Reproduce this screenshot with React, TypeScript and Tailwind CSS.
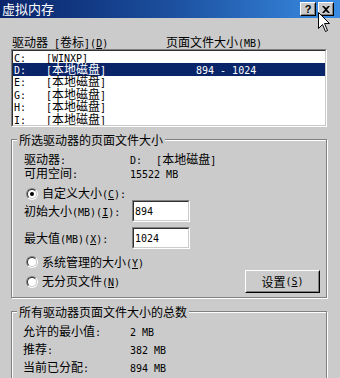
import React from "react";

const GRAY = "bg-[#cbcbcb]";

function T({ s }: { s: string }) {
  const out: React.ReactNode[] = [];
  const re = /([\x00-\x7f]+)|([^\x00-\x7f]+)/g;
  let m: RegExpExecArray | null;
  let k = 0;
  while ((m = re.exec(s))) {
    if (m[1]) {
      const seg = m[1];
      const sub: React.ReactNode[] = [];
      let buf = "";
      for (let i = 0; i < seg.length; i++) {
        if (seg[i] === "&" && i + 1 < seg.length) {
          if (buf) sub.push(buf);
          buf = "";
          sub.push(
            <span key={i} className="underline underline-offset-[1px]">
              {seg[i + 1]}
            </span>
          );
          i++;
        } else buf += seg[i];
      }
      if (buf) sub.push(buf);
      out.push(
        <span
          key={k++}
          className="inline-block font-['DejaVu_Sans_Mono',monospace] text-[10px] whitespace-pre"
        >
          {sub}
        </span>
      );
    } else {
      out.push(
        <span key={k++} className="inline-block font-['Noto_Sans_CJK_SC',sans-serif] text-[12px]">
          {m[2]}
        </span>
      );
    }
  }
  return <>{out}</>;
}

function Sunken({ className = "", children }: { className?: string; children?: React.ReactNode }) {
  return (
    <div className={`border border-t-[#808080] border-l-[#808080] border-b-white border-r-white ${className}`}>
      <div className="w-full h-full border border-t-[#303030] border-l-[#303030] border-b-[#cbcbcb] border-r-[#cbcbcb] bg-white overflow-hidden">
        {children}
      </div>
    </div>
  );
}

function Radio({ on }: { on?: boolean }) {
  return (
    <div className="w-[12px] h-[12px] rounded-full border border-t-[#808080] border-l-[#808080] border-b-white border-r-white shrink-0">
      <div className="w-full h-full rounded-full border border-t-[#303030] border-l-[#303030] border-b-[#cbcbcb] border-r-[#cbcbcb] bg-white flex items-center justify-center">
        {on && <div className="w-[4px] h-[4px] rounded-full bg-black" />}
      </div>
    </div>
  );
}

function Group({ label, className = "", children }: { label: string; className?: string; children?: React.ReactNode }) {
  return (
    <div className={`relative border border-[#808080] shadow-[inset_1px_1px_0_#fff,1px_1px_0_#fff] ${className}`}>
      <div className={`absolute -top-[8px] left-[5px] px-[2px] ${GRAY} leading-[14px] text-black`}>
        <T s={label} />
      </div>
      {children}
    </div>
  );
}

function CapBtn({ children }: { children: React.ReactNode }) {
  return (
    <div className="w-[16px] h-[14px] border border-t-white border-l-white border-b-black border-r-black bg-[#cbcbcb]">
      <div className="w-full h-full border border-t-[#cbcbcb] border-l-[#cbcbcb] border-b-[#808080] border-r-[#808080] flex items-center justify-center">
        {children}
      </div>
    </div>
  );
}

const drives = [
  { d: "C:", n: "[WINXP]", v: "" },
  { d: "D:", n: "[本地磁盘]", v: "894 - 1024", sel: true },
  { d: "E:", n: "[本地磁盘]", v: "" },
  { d: "G:", n: "[本地磁盘]", v: "" },
  { d: "H:", n: "[本地磁盘]", v: "" },
  { d: "I:", n: "[本地磁盘]", v: "" },
];

export default function App() {
  return (
    <div className={`relative w-[340px] h-[378px] overflow-hidden ${GRAY} text-black leading-[14px]`}>
      {/* Title bar */}
      <div className="h-[18px] flex items-center pl-[2px] pr-[6px] bg-gradient-to-r from-[#0a246a] via-[#1c4f9e] to-[#3a8de4]">
        <div className="flex-1 text-white text-[13px] font-['Noto_Sans_CJK_SC',sans-serif] leading-[16px]">
          虚拟内存
        </div>
        <div className="flex gap-[2px]">
          <CapBtn>
            <span className="font-['Liberation_Sans',sans-serif] font-bold text-[11px] leading-[11px] text-black">?</span>
          </CapBtn>
          <CapBtn>
            <svg width="8" height="7" viewBox="0 0 8 7">
              <path d="M0 0h2l2 2 2-2h2L5 3.5 8 7H6L4 5 2 7H0l3-3.5z" fill="#000" />
            </svg>
          </CapBtn>
        </div>
      </div>

      <div className="pl-[11px] pr-[13px]">
        {/* Header */}
        <div className="mt-[16px] h-[14px] flex">
          <div className="w-[155px] pl-[1px]">
            <T s="驱动器 [卷标](&D)" />
          </div>
          <div>
            <T s="页面文件大小(MB)" />
          </div>
        </div>

        {/* List */}
        <Sunken className="mt-[1px] h-[78px]">
          {drives.map((r) => (
            <div
              key={r.d}
              className={`h-[12.4px] flex items-center leading-[12px] ${r.sel ? "bg-[#0a246a] text-white" : ""}`}
            >
              <div className="w-[33px] pl-[1px]">
                <T s={r.d} />
              </div>
              <div className="w-[150px]">
                <T s={r.n} />
              </div>
              <div>
                <T s={r.v} />
              </div>
            </div>
          ))}
        </Sunken>

        {/* Group 1 */}
        <Group label="所选驱动器的页面文件大小" className="mt-[12px] pb-[4px]">
          <div className="mt-[11px] h-[14px] flex pl-[12px]">
            <div className="w-[106px]">
              <T s="驱动器:" />
            </div>
            <div>
              <T s="D:  " />
              <span className="ml-[2px]" />
              <T s="[本地磁盘]" />
            </div>
          </div>
          <div className="h-[14px] flex pl-[12px]">
            <div className="w-[106px]">
              <T s="可用空间:" />
            </div>
            <div>
              <T s="15522 MB" />
            </div>
          </div>
          <div className="mt-[8px] h-[13px] flex items-center pl-[14px] gap-[4px]">
            <Radio on />
            <div>
              <T s="自定义大小(&C):" />
            </div>
          </div>
          <div className="h-[22px] flex items-center pl-[12px]">
            <div className="w-[108px]">
              <T s="初始大小(MB)(&I):" />
            </div>
            <Sunken className="w-[58px] h-[22px]">
              <div className="pl-[1px] leading-[14px]">
                <T s="894" />
              </div>
            </Sunken>
          </div>
          <div className="mt-[5px] h-[22px] flex items-center pl-[12px]">
            <div className="w-[108px]">
              <T s="最大值(MB)(&X):" />
            </div>
            <Sunken className="w-[58px] h-[22px]">
              <div className="pl-[1px] leading-[14px]">
                <T s="1024" />
              </div>
            </Sunken>
          </div>
          <div className="mt-[7px] h-[12px] flex items-center pl-[14px] gap-[4px]">
            <Radio />
            <div>
              <T s="系统管理的大小(&Y)" />
            </div>
          </div>
          <div className="mt-[2px] h-[23px] flex items-center justify-between pl-[14px] pr-[6px]">
            <div className="flex items-center gap-[4px]">
              <Radio />
              <div>
                <T s="无分页文件(&N)" />
              </div>
            </div>
            <div className="w-[75px] h-[23px] border border-t-white border-l-white border-b-black border-r-black">
              <div className="w-full h-full border border-t-[#cbcbcb] border-l-[#cbcbcb] border-b-[#808080] border-r-[#808080] flex items-center justify-center">
                <T s="设置(&S)" />
              </div>
            </div>
          </div>
        </Group>

        {/* Group 2 */}
        <Group label="所有驱动器页面文件大小的总数" className="mt-[13px] pb-[20px]">
          <div className="mt-[11px] h-[14px] flex pl-[11px]">
            <div className="w-[107px]">
              <T s="允许的最小值:" />
            </div>
            <div>
              <T s="2 MB" />
            </div>
          </div>
          <div className="mt-[4px] h-[14px] flex pl-[11px]">
            <div className="w-[107px]">
              <T s="推荐:" />
            </div>
            <div>
              <T s="382 MB" />
            </div>
          </div>
          <div className="mt-[4px] h-[14px] flex pl-[11px]">
            <div className="w-[107px]">
              <T s="当前已分配:" />
            </div>
            <div>
              <T s="894 MB" />
            </div>
          </div>
        </Group>
      </div>

      {/* Mouse cursor */}
      <svg className="absolute left-[318px] top-[12px]" width="13" height="21" viewBox="0 0 13 21">
        <path
          d="M0.5 0.5V16.5L4.5 12.5L7.5 19.5L9.5 18.5L6.5 11.5H11.5Z"
          fill="#fff"
          stroke="#000"
          strokeWidth="1"
          strokeLinejoin="miter"
        />
      </svg>
    </div>
  );
}
